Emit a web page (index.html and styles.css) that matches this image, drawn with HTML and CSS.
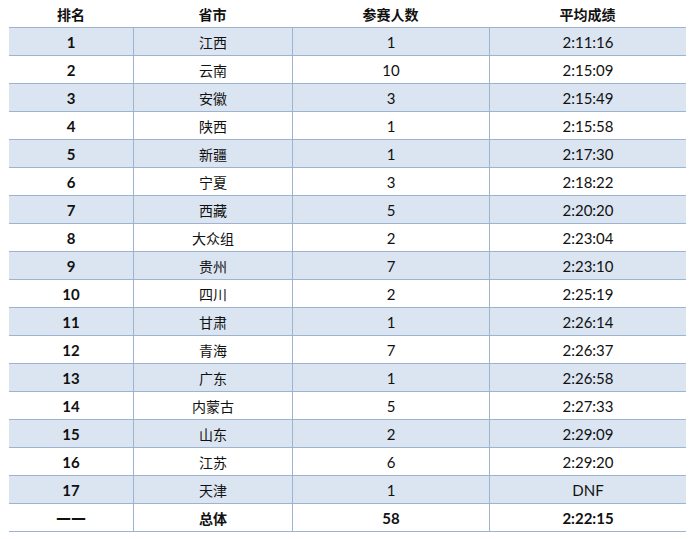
FILE: index.html
```html
<!DOCTYPE html>
<html lang="zh">
<head>
<meta charset="utf-8">
<link rel="stylesheet" href="styles.css">
</head>
<body>
<table class="rank">
  <colgroup>
    <col class="c1"><col class="c2"><col class="c3"><col class="c4">
  </colgroup>
  <thead>
    <tr><th>排名</th><th>省市</th><th>参赛人数</th><th>平均成绩</th></tr>
  </thead>
  <tbody>
    <tr class="alt"><td class="no">1</td><td class="cn">江西</td><td>1</td><td>2:11:16</td></tr>
    <tr><td class="no">2</td><td class="cn">云南</td><td>10</td><td>2:15:09</td></tr>
    <tr class="alt"><td class="no">3</td><td class="cn">安徽</td><td>3</td><td>2:15:49</td></tr>
    <tr><td class="no">4</td><td class="cn">陕西</td><td>1</td><td>2:15:58</td></tr>
    <tr class="alt"><td class="no">5</td><td class="cn">新疆</td><td>1</td><td>2:17:30</td></tr>
    <tr><td class="no">6</td><td class="cn">宁夏</td><td>3</td><td>2:18:22</td></tr>
    <tr class="alt"><td class="no">7</td><td class="cn">西藏</td><td>5</td><td>2:20:20</td></tr>
    <tr><td class="no">8</td><td class="cn">大众组</td><td>2</td><td>2:23:04</td></tr>
    <tr class="alt"><td class="no">9</td><td class="cn">贵州</td><td>7</td><td>2:23:10</td></tr>
    <tr><td class="no">10</td><td class="cn">四川</td><td>2</td><td>2:25:19</td></tr>
    <tr class="alt"><td class="no">11</td><td class="cn">甘肃</td><td>1</td><td>2:26:14</td></tr>
    <tr><td class="no">12</td><td class="cn">青海</td><td>7</td><td>2:26:37</td></tr>
    <tr class="alt"><td class="no">13</td><td class="cn">广东</td><td>1</td><td>2:26:58</td></tr>
    <tr><td class="no">14</td><td class="cn">内蒙古</td><td>5</td><td>2:27:33</td></tr>
    <tr class="alt"><td class="no">15</td><td class="cn">山东</td><td>2</td><td>2:29:09</td></tr>
    <tr><td class="no">16</td><td class="cn">江苏</td><td>6</td><td>2:29:20</td></tr>
    <tr class="alt"><td class="no">17</td><td class="cn">天津</td><td>1</td><td>DNF</td></tr>
    <tr class="total"><td class="no dash">——</td><td class="cn">总体</td><td>58</td><td>2:22:15</td></tr>
  </tbody>
</table>
</body>
</html>
```
FILE: styles.css
```css
html, body {
  margin: 0;
  padding: 0;
  background: #ffffff;
}

body {
  padding-left: 9px;
  font-family: "Lato", "Noto Sans CJK SC", sans-serif;
  font-size: 15px;
  color: #111111;
}

.rank {
  border-collapse: separate;
  border-spacing: 0;
  table-layout: fixed;
  width: 677px;
}

.c1 { width: 124px; }
.c2 { width: 159px; }
.c3 { width: 197px; }
.c4 { width: 197px; }

.rank th,
.rank td {
  height: 26px;
  padding: 1px 0 0;
  text-align: center;
  vertical-align: middle;
  border-bottom: 1px solid #9db3d0;
  line-height: 26px;
  white-space: nowrap;
}

.rank th {
  font-weight: bold;
  font-family: "Noto Sans CJK SC", sans-serif;
  font-size: 14px;
}

.rank td + td {
  border-left: 1px solid #9db3d0;
}

.rank tr.alt td {
  background: #dbe5f1;
}

.rank td.cn {
  font-family: "Noto Sans CJK SC", sans-serif;
  font-size: 14px;
}

.rank td.no {
  font-weight: bold;
}

.rank td.dash {
  font-family: "DejaVu Sans", sans-serif;
  font-size: 15px;
  letter-spacing: 0;
}

.rank tr.total td {
  font-weight: bold;
}
```
